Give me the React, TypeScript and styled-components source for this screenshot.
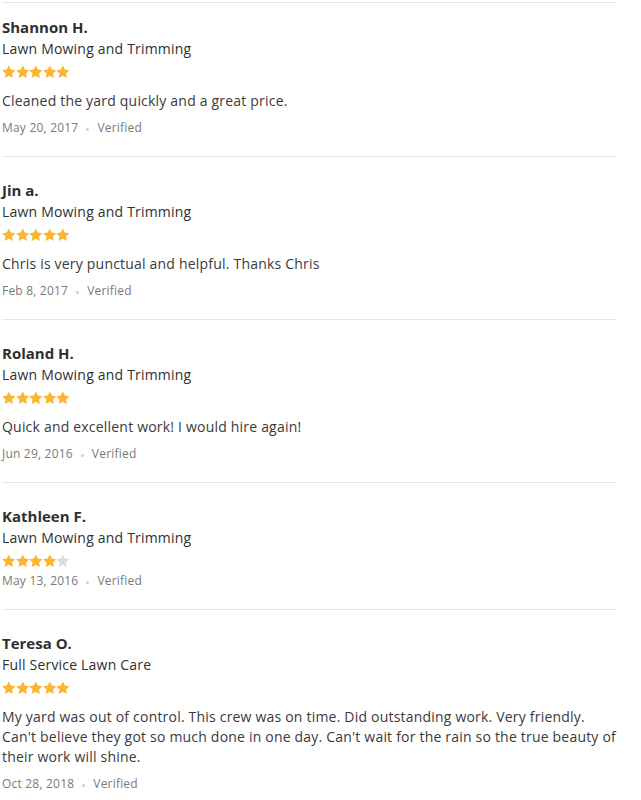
import styled, { createGlobalStyle } from "styled-components";

const GlobalStyle = createGlobalStyle`
  body {
    margin: 0;
    background: #fff;
    font-family: "Open Sans", Lato, sans-serif;
  }
`;

type ReviewDTO = {
  name: string;
  service: string;
  rating: number;
  text?: string;
  date: string;
};

const reviews: ReviewDTO[] = [
  {
    name: "Shannon H.",
    service: "Lawn Mowing and Trimming",
    rating: 5,
    text: "Cleaned the yard quickly and a great price.",
    date: "May 20, 2017",
  },
  {
    name: "Jin a.",
    service: "Lawn Mowing and Trimming",
    rating: 5,
    text: "Chris is very punctual and helpful. Thanks Chris",
    date: "Feb 8, 2017",
  },
  {
    name: "Roland H.",
    service: "Lawn Mowing and Trimming",
    rating: 5,
    text: "Quick and excellent work! I would hire again!",
    date: "Jun 29, 2016",
  },
  {
    name: "Kathleen F.",
    service: "Lawn Mowing and Trimming",
    rating: 4,
    date: "May 13, 2016",
  },
  {
    name: "Teresa O.",
    service: "Full Service Lawn Care",
    rating: 5,
    text: "My yard was out of control. This crew was on time. Did outstanding work. Very friendly. Can't believe they got so much done in one day. Can't wait for the rain so the true beauty of their work will shine.",
    date: "Oct 28, 2018",
  },
];

const List = styled.div`
  width: 614px;
  padding: 2px 0 0 2px;
`;

const Review = styled.div`
  border-top: 1px solid #e6e6e6;
  padding: 22px 0 19px;

  &:first-child {
    padding-top: 13px;
  }
`;

const Name = styled.div`
  font-size: 15px;
  font-weight: 700;
  line-height: 22px;
  color: #2f2f2f;
`;

const Service = styled.div`
  font-size: 14px;
  line-height: 22px;
  letter-spacing: 0.2px;
  color: #2f2f2f;
`;

const Stars = styled.div`
  display: flex;
  align-items: center;
  height: 23px;
`;

const Star = styled.svg<{ $on: boolean }>`
  width: 13.6px;
  height: 13.6px;
  fill: ${({ $on }) => ($on ? "#fbb631" : "#dcdcdc")};
`;

const Text = styled.div`
  margin: 8px 0;
  font-size: 14px;
  line-height: 20px;
  letter-spacing: 0.2px;
  color: #3a3a3a;
`;

const Meta = styled.div`
  display: flex;
  align-items: center;
  font-size: 12px;
  line-height: 18px;
  letter-spacing: 0.2px;
  color: #7a7a7a;
`;

const Dot = styled.span`
  width: 3px;
  height: 3px;
  border-radius: 50%;
  background: #cfcfcf;
  margin: 2px 8px 0;
`;

const StarIcon = ({ on }: { on: boolean }) => (
  <Star $on={on} viewBox="0 0 24 24">
    <path d="M12 .8l3.6 7.3 8 1.2-5.8 5.6 1.4 8L12 19.1l-7.2 3.8 1.4-8L.4 9.3l8-1.2z" />
  </Star>
);

const App = () => {
  return (
    <>
      <GlobalStyle />
      <List>
        {reviews.map((r) => (
          <Review key={r.name}>
            <Name>{r.name}</Name>
            <Service>{r.service}</Service>
            <Stars>
              {[1, 2, 3, 4, 5].map((n) => (
                <StarIcon key={n} on={n <= r.rating} />
              ))}
            </Stars>
            {r.text && <Text>{r.text}</Text>}
            <Meta>
              <span>{r.date}</span>
              <Dot />
              <span>Verified</span>
            </Meta>
          </Review>
        ))}
      </List>
    </>
  );
};

export default App;
